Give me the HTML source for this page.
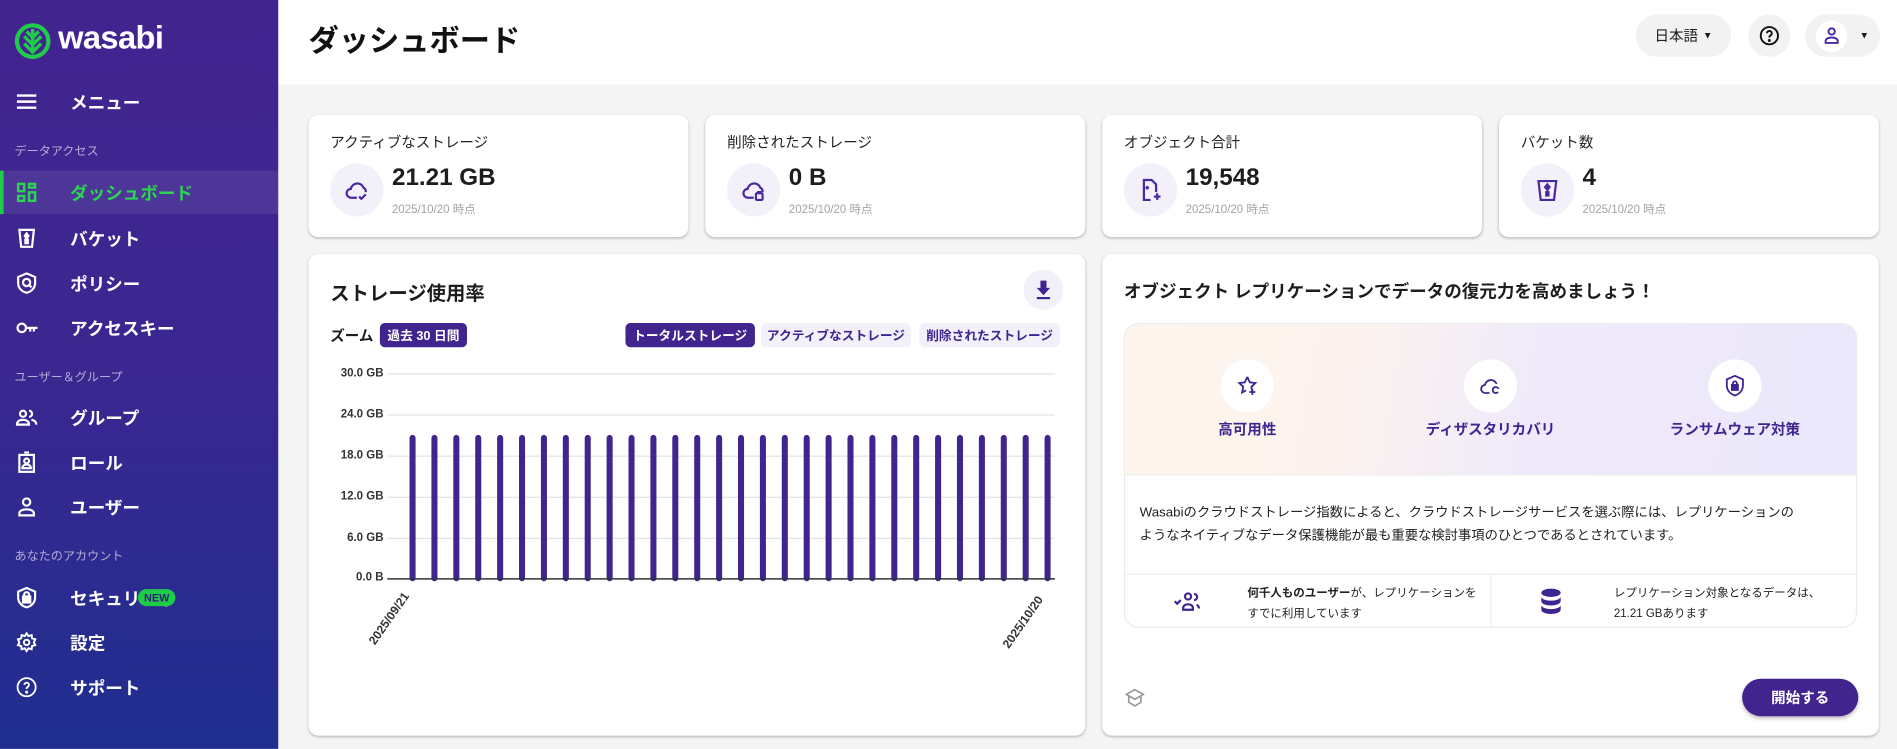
<!DOCTYPE html>
<html><head><meta charset="utf-8"><style>
*{box-sizing:border-box;margin:0;padding:0}
html,body{width:1897px;height:749px;overflow:hidden;background:#f4f4f4}
#w{position:absolute;left:0;top:0;width:1568px;height:619px;transform:scale(1.20982);transform-origin:0 0;font-family:"Liberation Sans","Noto Sans CJK JP",sans-serif;color:#1d1d1f}
.a{position:absolute}
#sb{left:0;top:0;width:230px;height:619px;background:linear-gradient(180deg,#42248f 0%,#3a2790 50%,#1f2e8f 100%);color:#fff}
.it{position:absolute;left:0;width:230px;height:36px;display:flex;align-items:center;font-size:14.5px;font-weight:bold}
.it svg{position:absolute;left:13px;top:9px}
.it span{position:absolute;left:58px}
.sec{position:absolute;left:12px;font-size:10px;color:#b6acd8}
.card{position:absolute;background:#fff;border-radius:8px;box-shadow:0 1px 2px rgba(0,0,0,.25)}
.ct{position:absolute;left:18px;top:14px;font-size:12px;color:#222}
.ic{position:absolute;left:18px;top:40px;width:44px;height:44px;border-radius:50%;background:#f2f0f9}
.ic svg{position:absolute;left:11px;top:11px}
.val{position:absolute;left:69px;top:41px;font-size:20px;font-weight:bold}
.dt{position:absolute;left:69px;top:70px;font-size:9.5px;color:#a3a3a3}
.pill{position:absolute;top:267px;height:20px;border-radius:4px;font-size:10.5px;font-weight:bold;display:flex;align-items:center;justify-content:center}
.ylab{position:absolute;left:265px;width:52px;text-align:right;font-size:9.5px;font-weight:bold;color:#333}
.feat{position:absolute;top:297px;width:44px;height:44px;border-radius:50%;background:#fff}
.feat svg{position:absolute;left:12px;top:12px}
.fl{position:absolute;top:346px;font-size:12px;font-weight:bold;color:#3f2590;text-align:center;width:160px}
.rot{position:absolute;width:70px;text-align:right;font-size:10px;font-weight:bold;color:#333;transform:rotate(-55deg);transform-origin:right top}
</style></head><body><div id="w">
<div class="a" style="left:230px;top:0;width:1338px;height:70px;background:#fff"></div>
<div class="a" style="left:255px;top:14px;font-size:25px;font-weight:bold;color:#111">ダッシュボード</div>
<div class="a" style="left:1352px;top:12px;width:79px;height:35px;border-radius:18px;background:#f2f2f3;font-size:12px;display:flex;align-items:center;justify-content:center">日本語 <span style="font-size:8px;margin-left:4px">▼</span></div>
<div class="a" style="left:1445px;top:12px;width:35px;height:35px;border-radius:18px;background:#f2f2f3"><svg class="a" style="left:8px;top:8px" width="19" height="19" viewBox="0 0 24 24" fill="none" stroke="#111" stroke-width="2"><circle cx="12" cy="12" r="9"/><path d="M9.5 9.5a2.5 2.5 0 1 1 3.5 2.3c-.7.4-1 1-1 1.7v.5"/><circle cx="12" cy="17" r=".6" fill="#111"/></svg></div>
<div class="a" style="left:1492px;top:12px;width:62px;height:35px;border-radius:18px;background:#f2f2f3"><div class="a" style="left:9px;top:5px;width:26px;height:26px;border-radius:50%;background:#fff"></div><svg class="a" style="left:15px;top:10px" width="14" height="15" viewBox="0 0 14 15" fill="none" stroke="#4b2aa0" stroke-width="1.6"><circle cx="7" cy="4" r="2.6"/><path d="M2 13.5v-1.5c0-2 2.5-3 5-3s5 1 5 3v1.5z"/></svg><span class="a" style="left:45px;top:13px;font-size:8px">▼</span></div>

<div id="sb" class="a">
<svg class="a" style="left:12px;top:18px" width="30" height="32" viewBox="0 0 30 32"><circle cx="15" cy="16" r="13" fill="none" stroke="#1fcc4a" stroke-width="3.5"/><path d="M15 6v20M8 12l7 7 7-7M8 18l7 7 7-7M10 8l5 5 5-5" stroke="#1fcc4a" stroke-width="2.8" fill="none"/></svg>
<div class="a" style="left:48px;top:16px;font-size:27px;font-weight:bold;letter-spacing:-.5px">wasabi</div>
<div class="it" style="top:66px"><svg width="18" height="18" viewBox="0 0 18 18" stroke="#fff" stroke-width="2"><path d="M1 4h16M1 9h16M1 14h16"/></svg><span>メニュー</span></div>
<div class="sec" style="top:116px">データアクセス</div>
<div class="it" style="top:141px;background:rgba(255,255,255,.08);color:#2bd451;border-left:3px solid #1fcc4a"><svg width="18" height="18" viewBox="0 0 18 18" fill="none" stroke="#2bd451" stroke-width="2" style="left:10px"><rect x="2" y="2" width="5" height="6"/><rect x="11" y="2" width="5" height="3"/><rect x="2" y="12" width="5" height="4"/><rect x="11" y="9" width="5" height="7"/></svg><span style="left:55px">ダッシュボード</span></div>
<div class="it" style="top:179px"><svg width="18" height="18" viewBox="0 0 18 18" fill="none" stroke="#fff" stroke-width="1.8"><path d="M3 2h12l-1.5 14h-9z"/><path d="M9 5l1.5 2L9 9 7.5 7z" fill="#fff"/><rect x="8" y="10" width="2" height="3" fill="#fff"/></svg><span>バケット</span></div>
<div class="it" style="top:216px"><svg width="18" height="18" viewBox="0 0 18 18" fill="none" stroke="#fff" stroke-width="1.8"><path d="M9 1l7 3v5c0 4-3 7-7 8-4-1-7-4-7-8V4z"/><circle cx="9" cy="8.5" r="3"/><path d="M11 10.5l2 2"/></svg><span>ポリシー</span></div>
<div class="it" style="top:253px"><svg width="20" height="18" viewBox="0 0 20 18" fill="none" stroke="#fff" stroke-width="1.8"><circle cx="5" cy="9" r="3.5"/><path d="M8.5 9H18M15 9v3M12 9v3"/></svg><span>アクセスキー</span></div>
<div class="sec" style="top:303px">ユーザー＆グループ</div>
<div class="it" style="top:327px"><svg width="18" height="18" viewBox="0 0 18 18" fill="none" stroke="#fff" stroke-width="1.8"><circle cx="6" cy="6" r="2.5"/><path d="M1 15c0-3 2.5-4 5-4s5 1 5 4zM11 3.5a2.5 2.5 0 0 1 0 5M13 11c2 .3 4 1.3 4 4"/></svg><span>グループ</span></div>
<div class="it" style="top:364px"><svg width="18" height="18" viewBox="0 0 18 18" fill="none" stroke="#fff" stroke-width="1.8"><rect x="3" y="3" width="12" height="14"/><path d="M7 1h4"/><circle cx="9" cy="8" r="2"/><path d="M5.5 14c0-2 1.5-3 3.5-3s3.5 1 3.5 3z"/></svg><span>ロール</span></div>
<div class="it" style="top:401px"><svg width="18" height="18" viewBox="0 0 18 18" fill="none" stroke="#fff" stroke-width="1.8"><circle cx="9" cy="5" r="3"/><path d="M3 16v-1.5c0-2.5 3-3.5 6-3.5s6 1 6 3.5V16z"/></svg><span>ユーザー</span></div>
<div class="sec" style="top:451px">あなたのアカウント</div>
<div class="it" style="top:476px"><svg width="18" height="18" viewBox="0 0 18 18" fill="none" stroke="#fff" stroke-width="1.8"><path d="M9 1l7 3v5c0 4-3 7-7 8-4-1-7-4-7-8V4z"/><rect x="6" y="8" width="6" height="5" fill="#fff"/><path d="M7 8V6.5a2 2 0 0 1 4 0V8"/></svg><span>セキュリティ</span><div class="a" style="left:114px;top:11px;height:14px;width:31px;border-radius:7px;background:#1fcc4a;color:#2a1f7a;font-size:9px;display:flex;align-items:center;justify-content:center">NEW</div></div>
<div class="it" style="top:513px"><svg width="18" height="18" viewBox="0 0 24 24" fill="none" stroke="#fff" stroke-width="2.2"><circle cx="12" cy="12" r="3"/><path d="M12 2l2 3 3.5-1 .5 3.5 3.5 1-1.5 3.5 1.5 3-3.5 1-.5 3.5-3.5-1-2 3-2-3-3.5 1-.5-3.5-3.5-1 1.5-3L2.5 8.5 6 7.5 6.5 4 10 5z"/></svg><span>設定</span></div>
<div class="it" style="top:550px"><svg width="18" height="18" viewBox="0 0 24 24" fill="none" stroke="#fff" stroke-width="2"><circle cx="12" cy="12" r="10"/><path d="M9.5 9.5a2.5 2.5 0 1 1 3.5 2.3c-.7.4-1 1-1 1.7v.5"/><circle cx="12" cy="17.5" r=".7" fill="#fff"/></svg><span>サポート</span></div>
</div>

<div class="card" style="left:255px;top:95px;width:314px;height:101px"><div class="ct">アクティブなストレージ</div><div class="ic"><svg width="22" height="22" viewBox="0 0 24 24" fill="none" stroke="#4b2aa0" stroke-width="2"><path d="M12 19H7a4 4 0 0 1-.5-8A6 6 0 0 1 18 10a4 4 0 0 1 2 4"/><path d="M14 18l2 2 4-4"/></svg></div><div class="val">21.21 GB</div><div class="dt">2025/10/20 時点</div></div>
<div class="card" style="left:583px;top:95px;width:314px;height:101px"><div class="ct">削除されたストレージ</div><div class="ic"><svg width="22" height="22" viewBox="0 0 24 24" fill="none" stroke="#4b2aa0" stroke-width="2"><path d="M12 19H7a4 4 0 0 1-.5-8A6 6 0 0 1 18 10a4 4 0 0 1 2 4"/><rect x="14" y="15" width="6" height="6" rx="1"/><path d="M15 14h4"/></svg></div><div class="val">0 B</div><div class="dt">2025/10/20 時点</div></div>
<div class="card" style="left:911px;top:95px;width:314px;height:101px"><div class="ct">オブジェクト合計</div><div class="ic"><svg width="22" height="22" viewBox="0 0 24 24" fill="none" stroke="#4b2aa0" stroke-width="2"><path d="M12 21H6V3h7l4 4v7"/><path d="M18 15v6M15 18h6"/><circle cx="9" cy="10" r=".6" fill="#4b2aa0"/></svg></div><div class="val">19,548</div><div class="dt">2025/10/20 時点</div></div>
<div class="card" style="left:1239px;top:95px;width:314px;height:101px"><div class="ct">バケット数</div><div class="ic"><svg width="22" height="22" viewBox="0 0 24 24" fill="none" stroke="#4b2aa0" stroke-width="2"><path d="M4 4h16l-2 17H6z"/><path d="M12 7l2 2.5-2 2.5-2-2.5z" fill="#4b2aa0"/><rect x="11" y="14" width="2" height="3" fill="#4b2aa0"/></svg></div><div class="val">4</div><div class="dt">2025/10/20 時点</div></div>

<div class="card" style="left:255px;top:210px;width:642px;height:398px"></div>
<div class="a" style="left:273px;top:229px;font-size:16px;font-weight:bold">ストレージ使用率</div>
<div class="a" style="left:846px;top:223px;width:33px;height:33px;border-radius:50%;background:#f2f0f9"><svg class="a" style="left:9px;top:8px" width="15" height="17" viewBox="0 0 15 17" fill="#3f2590"><path d="M5 1h5v6h3l-5.5 6L2 7h3z"/><rect x="2" y="14.5" width="11" height="1.8"/></svg></div>
<div class="a" style="left:273px;top:269px;font-size:12px;font-weight:bold">ズーム</div>
<div class="pill" style="left:314px;width:72px;background:#42248f;color:#fff">過去 30 日間</div>
<div class="pill" style="left:517px;width:107px;background:#42248f;color:#fff">トータルストレージ</div>
<div class="pill" style="left:629px;width:124px;background:#f2f0f9;color:#3f2590">アクティブなストレージ</div>
<div class="pill" style="left:760px;width:116px;background:#f2f0f9;color:#3f2590">削除されたストレージ</div>
<div class="ylab" style="top:303px">30.0 GB</div><div class="ylab" style="top:337px">24.0 GB</div><div class="ylab" style="top:371px">18.0 GB</div><div class="ylab" style="top:405px">12.0 GB</div><div class="ylab" style="top:439px">6.0 GB</div><div class="ylab" style="top:472px">0.0 B</div>
<svg class="a" style="left:320px;top:300px" width="560" height="185">
<g stroke="#e4e4e4" stroke-width="1"><path d="M0 9h552M0 43h552M0 77h552M0 111h552M0 145h552"/></g>
<g stroke="#42248f" stroke-width="5" stroke-linecap="round" id="bars"></g>
<path d="M0 178.5h552" stroke="#333" stroke-width="1.2"/>
</svg>
<div class="rot" style="left:262px;top:488px">2025/09/21</div>
<div class="rot" style="left:786px;top:491px">2025/10/20</div>

<div class="card" style="left:911px;top:210px;width:642px;height:398px"></div>
<div class="a" style="left:929px;top:230px;font-size:14.5px;font-weight:bold">オブジェクト レプリケーションでデータの復元力を高めましょう！</div>
<div class="a" style="left:929px;top:267px;width:606px;height:252px;border:1px solid #ececec;border-radius:12px;overflow:hidden;background:#fff">
<div class="a" style="left:0;top:0;width:606px;height:125px;background:linear-gradient(100deg,#fdf5ec 0%,#fdf3ee 30%,#efeafa 55%,#ebe7fb 100%);border-bottom:1px solid #ececec"></div>
<div class="a" style="left:0;top:206px;width:606px;height:1px;background:#ececec"></div>
<div class="a" style="left:302px;top:206px;width:1px;height:46px;background:#ececec"></div>
</div>
<div class="feat" style="left:1009px"><svg width="20" height="20" viewBox="0 0 24 24" fill="none" stroke="#3f2590" stroke-width="1.8"><path d="M12 3l2.5 5.5 5.5.6-4 3.8 1 5.1M12 3L9.5 8.5 4 9.1l4 3.8-1.2 5.6 4-2.2"/><path d="M17 15v6M14 18h6"/></svg></div>
<div class="feat" style="left:1210px"><svg width="20" height="20" viewBox="0 0 24 24" fill="none" stroke="#3f2590" stroke-width="1.8"><path d="M11 19H7a4 4 0 0 1-.5-8A6 6 0 0 1 18 10"/><path d="M20 15a3 3 0 1 0-.5 3"/></svg></div>
<div class="feat" style="left:1412px"><svg width="20" height="20" viewBox="0 0 24 24" fill="none" stroke="#3f2590" stroke-width="1.8"><path d="M12 2l8 3.5v6c0 5-3.5 8.5-8 10-4.5-1.5-8-5-8-10v-6z"/><rect x="9" y="11" width="6" height="5" fill="#3f2590"/><path d="M10 11V9.5a2 2 0 0 1 4 0V11"/></svg></div>
<div class="fl" style="left:951px">高可用性</div>
<div class="fl" style="left:1152px">ディザスタリカバリ</div>
<div class="fl" style="left:1354px">ランサムウェア対策</div>
<div class="a" style="left:942px;top:415px;width:590px;font-size:11px;line-height:19px;color:#222;white-space:nowrap">Wasabiのクラウドストレージ指数によると、クラウドストレージサービスを選ぶ際には、レプリケーションの<br>ようなネイティブなデータ保護機能が最も重要な検討事項のひとつであるとされています。</div>
<svg class="a" style="left:970px;top:488px" width="22" height="20" viewBox="0 0 22 20" fill="none" stroke="#3f2590" stroke-width="1.8"><circle cx="12" cy="5" r="2.5"/><path d="M8 16v-1.5c0-2 2-3 4-3s4 1 4 3V16zM17 3a2.5 2.5 0 0 1 0 5M19 12c1.5.5 2 1.5 2 3M1 9l2 2 3-3"/></svg>
<div class="a" style="left:1031px;top:482px;width:192px;font-size:9.5px;line-height:17px;color:#222"><b>何千人ものユーザー</b>が、レプリケーションをすでに利用しています</div>
<svg class="a" style="left:1272px;top:486px" width="20" height="22" viewBox="0 0 20 22" fill="#3f2590"><ellipse cx="10" cy="4" rx="8" ry="3.5"/><path d="M2 7c0 2 3.5 3.5 8 3.5s8-1.5 8-3.5v4c0 2-3.5 3.5-8 3.5S2 13 2 11zM2 14c0 2 3.5 3.5 8 3.5s8-1.5 8-3.5v4c0 2-3.5 3.5-8 3.5S2 20 2 18z"/></svg>
<div class="a" style="left:1334px;top:482px;width:180px;font-size:9.5px;line-height:17px;color:#222">レプリケーション対象となるデータは、21.21 GBあります</div>
<svg class="a" style="left:930px;top:569px" width="16" height="16" viewBox="0 0 16 16" fill="none" stroke="#999" stroke-width="1.4"><path d="M8 1l7 4-7 4-7-4zM3 6.5v5l5 3 5-3v-5"/></svg>
<div class="a" style="left:1440px;top:561px;width:96px;height:31px;border-radius:16px;background:#42248f;color:#fff;font-size:12px;font-weight:bold;display:flex;align-items:center;justify-content:center;box-shadow:0 2px 3px rgba(0,0,0,.25)">開始する</div>
</div>
<script>
var g=document.getElementById('bars'),s='';
for(var i=0;i<30;i++){var x=21+i*18.1;s+='<line x1="'+x+'" y1="62" x2="'+x+'" y2="178"/>';}
g.innerHTML=s;
</script>
</body></html>
